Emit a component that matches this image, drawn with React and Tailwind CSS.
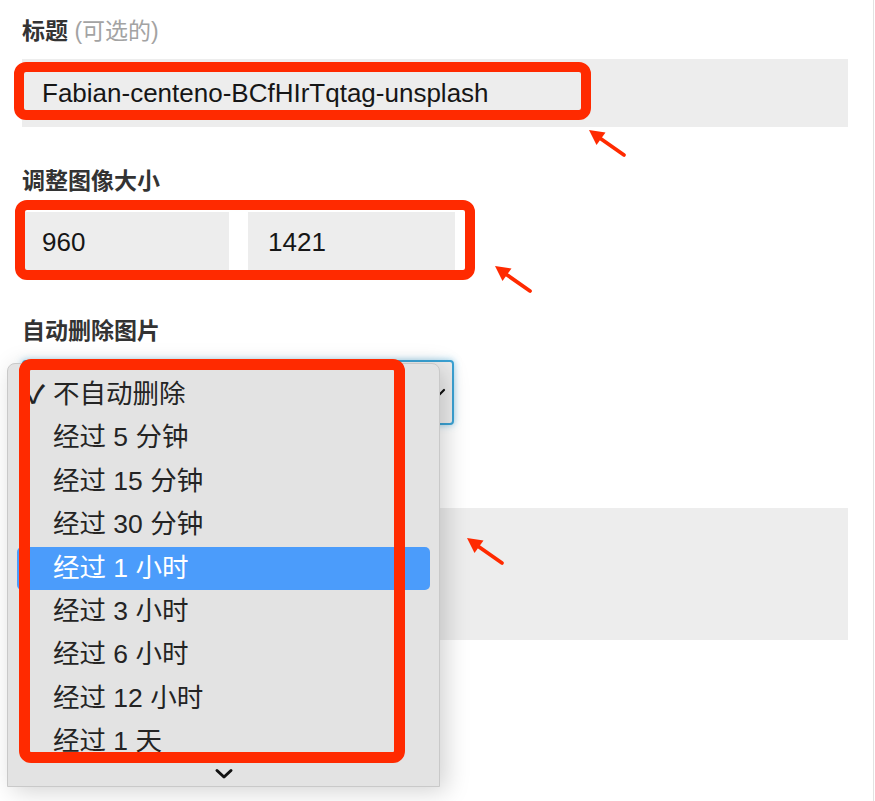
import React from 'react';

const FONT = "font-['Liberation_Sans','Noto_Sans_CJK_SC',sans-serif]";

const options = [
    '不自动删除',
    '经过 5 分钟',
    '经过 15 分钟',
    '经过 30 分钟',
    '经过 1 小时',
    '经过 3 小时',
    '经过 6 小时',
    '经过 12 小时',
    '经过 1 天',
];

// red annotation arrow, tip sits at the top-left of the box
const Arrow = ({ className }) => (
    <svg className={`absolute ${className}`} width="42" height="32" viewBox="0 0 42 32">
        <polygon points="2,2 9.5,17 18.5,4.5" fill="#ff2a00" />
        <line x1="12" y1="9.5" x2="37" y2="27" stroke="#ff2a00" strokeWidth="3.8" strokeLinecap="round" />
    </svg>
);

const Label = ({ children, extra }) => (
    <div className="h-[28px] leading-[28px] text-[23px] font-bold text-[#333]">
        {children}
        {extra && <span className="font-normal text-[#a3a3a3]"> {extra}</span>}
    </div>
);

const Field = ({ children, className }) => (
    <div className={`bg-[#ededed] flex items-center pl-[20px] text-[26px] text-[#161616] ${className}`}>{children}</div>
);

const Dropdown = () => (
    <div className="absolute left-[7px] top-[363px] w-[433px] h-[424px] bg-[#e3e3e3] border border-[#c9c9c9] rounded-t-[8px] shadow-[6px_4px_24px_rgba(0,0,0,0.18)] overflow-hidden">
        <div className="pt-[9px]">
            {options.map((opt, i) => {
                const active = i === 4;
                return (
                    <div
                        key={opt}
                        className={`relative mx-[9px] h-[43.4px] leading-[43.4px] pl-[36px] text-[26.5px] rounded-[5px] ${active ? 'bg-[#4b9cfb] text-white' : 'text-[#242424]'}`}
                    >
                        {i === 0 && <span className="absolute left-[10px] top-0 text-[25px] font-bold">✓</span>}
                        {opt}
                    </div>
                );
            })}
        </div>
        <div className="absolute bottom-0 left-0 right-0 h-[26px] bg-[#e3e3e3] flex justify-center items-start pt-[8px]">
            <svg width="20" height="12" viewBox="0 0 20 12">
                <path d="M3 2.5 L10 9 L17 2.5" fill="none" stroke="#111" strokeWidth="3" strokeLinecap="round" strokeLinejoin="round" />
            </svg>
        </div>
    </div>
);

export default function App() {
    return (
        <div className={`relative w-[874px] h-[801px] overflow-hidden bg-white border-r border-[#e2e2e2] ${FONT}`}>
            <div className="flex flex-col pl-[22px] pr-[25px] pt-[17px]">
                <Label extra="(可选的)">标题</Label>
                <Field className="mt-[14px] h-[68px]">Fabian-centeno-BCfHIrTqtag-unsplash</Field>

                <div className="mt-[40px]">
                    <Label>调整图像大小</Label>
                </div>
                <div className="mt-[17px] flex gap-[19px]">
                    <Field className="w-[207px] h-[60px]">960</Field>
                    <Field className="w-[207px] h-[60px]">1421</Field>
                </div>

                <div className="mt-[45px]">
                    <Label>自动删除图片</Label>
                </div>
                <div className="mt-[15px] w-[432px] h-[65px] bg-[#ededed] border-2 border-[#3aa2d4] rounded-[4px] shadow-[0_0_7px_rgba(58,162,212,0.55)] flex items-center justify-end pr-[6px]">
                    <svg width="16" height="10" viewBox="0 0 16 10">
                        <path d="M2 2 L8 8 L14 2" fill="none" stroke="#111" strokeWidth="2.2" strokeLinecap="round" />
                    </svg>
                </div>

                <div className="mt-[83px] h-[132px] bg-[#ededed]" />
            </div>

            <Dropdown />

            {/* annotations */}
            <div className="absolute left-[14px] top-[62px] w-[577px] h-[58px] border-[10px] border-[#ff2a00] rounded-[12px]" />
            <div className="absolute left-[15px] top-[200px] w-[460px] h-[80px] border-[10px] border-[#ff2a00] rounded-[12px]" />
            <div className="absolute left-[19px] top-[359px] w-[386px] h-[404px] border-[11px] border-[#ff2a00] rounded-[12px]" />
            <Arrow className="left-[587px] top-[128px]" />
            <Arrow className="left-[493px] top-[264px]" />
            <Arrow className="left-[465px] top-[536px]" />
        </div>
    );
}
